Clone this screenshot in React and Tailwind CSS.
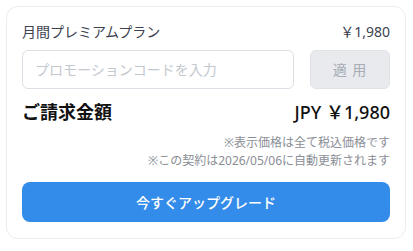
export default function App() {
  return (
    <div
      className="bg-white p-[6px] w-[413px] h-[251px]"
      style={{ fontFamily: '"Noto Sans", "Noto Sans CJK JP", sans-serif' }}
    >
      <div className="w-[400px] rounded-[12px] border border-[#ebedf0] bg-white px-[15px] pt-[14px] pb-[16px]">
        {/* Plan row */}
        <div className="flex items-center justify-between h-[20px] text-[14px] text-[#3c4250]">
          <span>月間プレミアムプラン</span>
          <span>￥1,980</span>
        </div>

        {/* Promo code */}
        <div className="flex gap-[16px] mt-[9px]">
          <input
            className="flex-1 h-[39px] px-[12px] border border-[#dcdfe6] rounded-[6px] text-[14px] text-[#3c4250] placeholder-[#c4c8cf] outline-none"
            placeholder="プロモーションコードを入力"
          />
          <button
            type="button"
            className="w-[80px] h-[39px] rounded-[6px] bg-[#e8eaee] border border-[#dfe2e7] text-[14px] text-[#a6abb4] tracking-[1px]"
          >
            適 用
          </button>
        </div>

        {/* Total */}
        <div className="flex items-center justify-between h-[28px] mt-[9px] text-[#111]">
          <span className="text-[18px] font-bold">ご請求金額</span>
          <span className="text-[18px] font-medium">JPY ￥1,980</span>
        </div>

        {/* Notes */}
        <div className="mt-[8px] text-right text-[12px] leading-[18px] text-[#8a8e96]">
          <p>※表示価格は全て税込価格です</p>
          <p>※この契約は2026/05/06に自動更新されます</p>
        </div>

        {/* Upgrade */}
        <button
          type="button"
          className="mt-[12px] w-full h-[40px] rounded-[8px] bg-[#338ce9] text-white text-[14px] font-medium"
        >
          今すぐアップグレード
        </button>
      </div>
    </div>
  );
}
